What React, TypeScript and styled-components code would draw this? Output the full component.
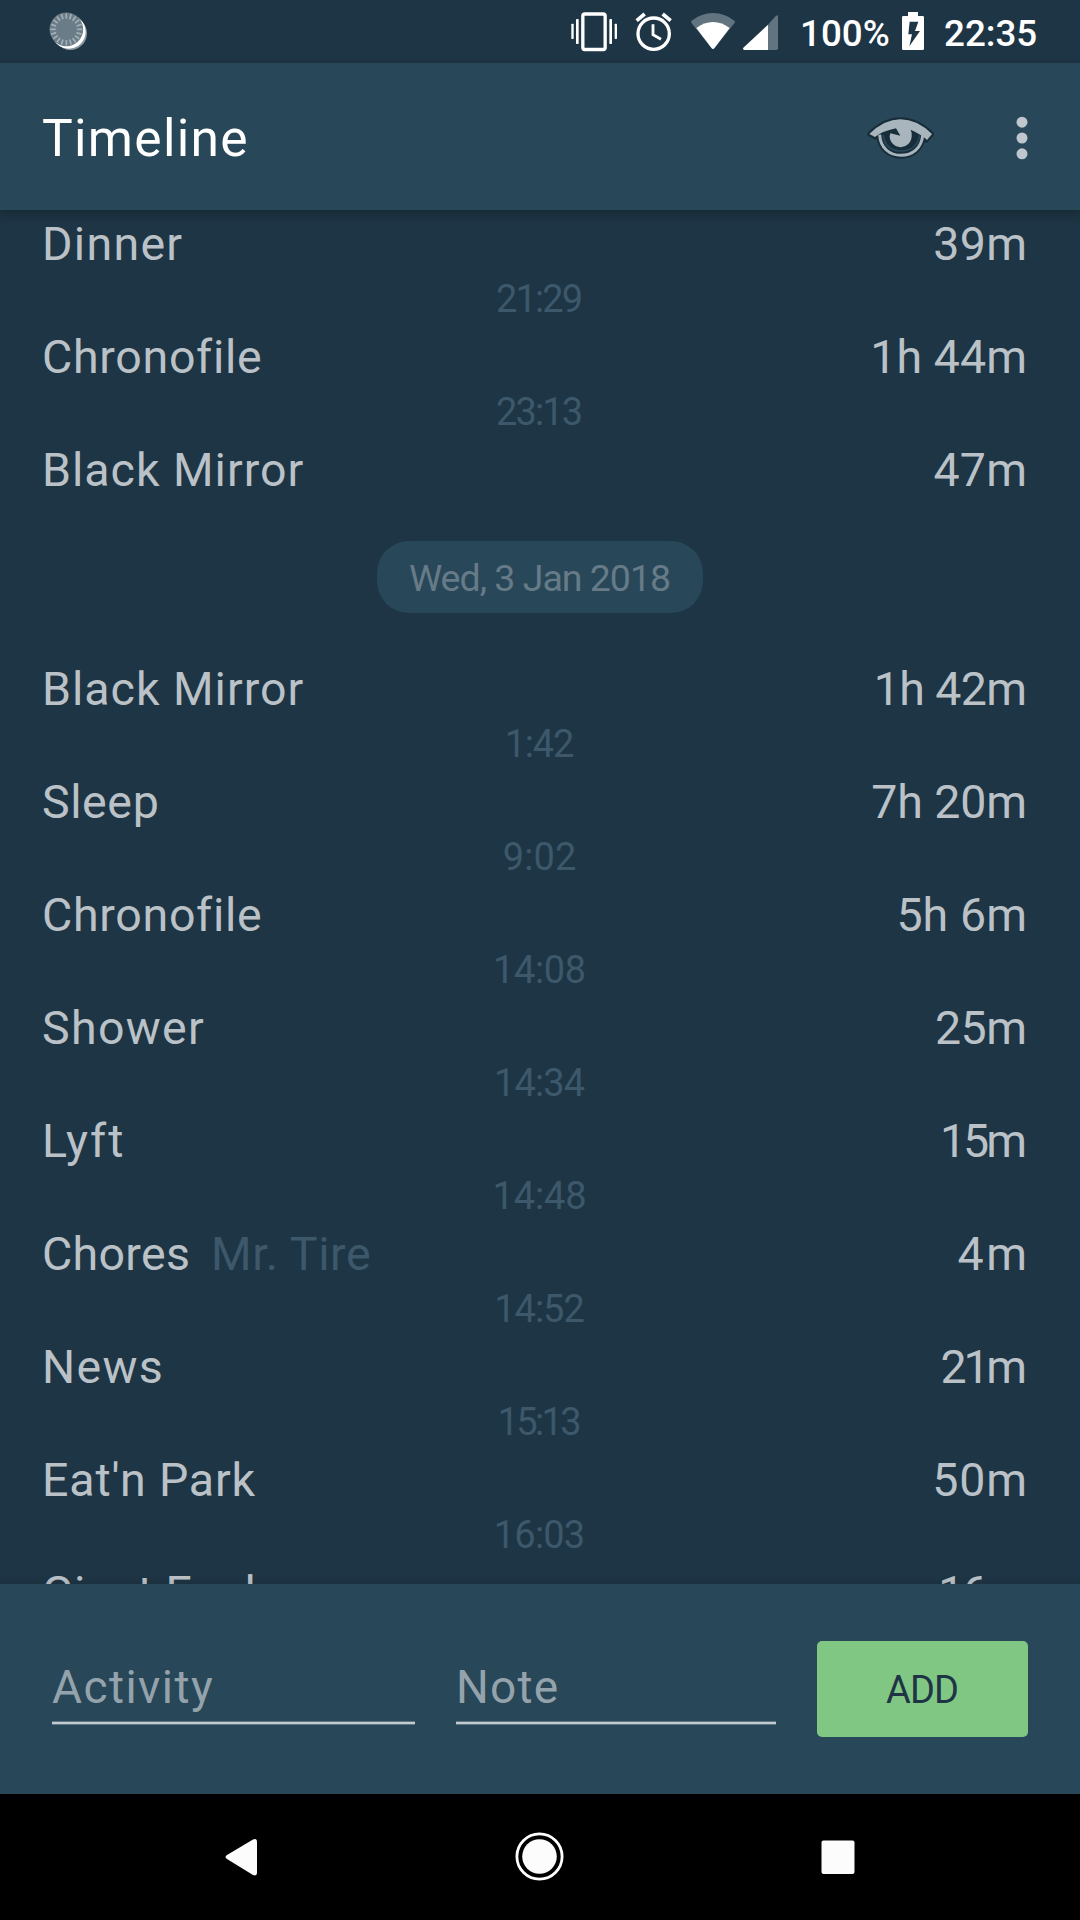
import React from 'react';
import styled, { createGlobalStyle } from 'styled-components';

const color = {
  background: '#1e3545',
  surface: '#284758',
  text: '#bbc2c7',
  faint: '#3c586a',
  chip: '#667b87',
  hint: '#94a3ab',
  accent: '#81c784',
  muted: '#62747f',
};

const GlobalStyle = createGlobalStyle`
  * { box-sizing: border-box; }
  body { margin: 0; background: ${color.background}; }
`;

const Screen = styled.div`
  display: flex;
  flex-direction: column;
  width: 1080px;
  height: 1920px;
  overflow: hidden;
  background: ${color.background};
  color: ${color.text};
  font-family: Roboto, 'Noto Sans', sans-serif;
`;

/* Cancels the trailing letter gap so that edges and centres stay exact. */
const Tracked = styled.span<{ $track?: number }>`
  letter-spacing: ${({ $track = 0 }) => $track}px;
  margin-right: ${({ $track = 0 }) => -$track}px;
  white-space: pre;
`;

const StatusBar = styled.header`
  flex: none;
  display: flex;
  height: 63px;
  padding-left: 46px;
`;

const StatusIcons = styled.div`
  display: flex;
  margin-left: auto;
  padding-right: 42px;
  color: #fff;
`;

const Glyph = styled.svg<{ $gap?: number }>`
  display: block;
  flex: none;
  margin-right: ${({ $gap = 0 }) => $gap}px;
`;

const StatusText = styled.span<{ $width: number }>`
  width: ${({ $width }) => $width}px;
  font-size: 36.75px;
  font-weight: 500;
  line-height: 67px;
  white-space: nowrap;
`;

const AppBar = styled.div`
  flex: none;
  z-index: 1;
  display: flex;
  align-items: center;
  height: 147px;
  padding: 0 52px 0 42px;
  background: ${color.surface};
  box-shadow: 0 4px 10px rgba(0, 0, 0, 0.28);
`;

const Title = styled.h1`
  flex: 1;
  margin: 0;
  padding-top: 5px;
  color: #fff;
  font-size: 51.5px;
  font-weight: 400;
  line-height: 60px;
`;

const AppActions = styled.div`
  display: flex;
  align-items: center;
  gap: 79px;
  padding-top: 3px;
`;

const IconButton = styled.button`
  display: block;
  margin: 0;
  padding: 0;
  border: 0;
  background: none;

  svg {
    display: block;
  }
`;

const Timeline = styled.main`
  flex: 1;
  min-height: 0;
  overflow: hidden;
  padding-top: 5px;
`;

const Entry = styled.div`
  display: flex;
  height: 58px;
  padding: 0 53px 0 42px;
  font-size: 46.5px;
  line-height: 58px;
`;

const Note = styled(Tracked)`
  margin-left: 21px;
  color: ${color.faint};
`;

const Duration = styled(Tracked)`
  margin-left: auto;
`;

const Time = styled.div`
  display: flex;
  justify-content: center;
  height: 55px;
  padding-right: 1px;
  color: ${color.faint};
  font-size: 38px;
  line-height: 53px;
`;

const DateChip = styled.div`
  display: flex;
  justify-content: center;
  width: 326px;
  height: 72px;
  margin: 42px auto 47px;
  border-radius: 32px;
  background: ${color.surface};
  color: ${color.chip};
  font-size: 37.5px;
  line-height: 74px;
`;

const EntryForm = styled.form`
  flex: none;
  z-index: 1;
  display: flex;
  gap: 41px;
  height: 210px;
  padding: 57px 52px 0;
  background: ${color.surface};
  box-shadow: 0 -2px 8px rgba(0, 0, 0, 0.1);
`;

const Field = styled.div<{ $width: number }>`
  width: ${({ $width }) => $width}px;
`;

const Input = styled.input<{ $track: number }>`
  display: block;
  width: 100%;
  height: 80px;
  margin: 0;
  padding: 12px 0 0;
  border: 0;
  outline: 0;
  background: none;
  color: ${color.text};
  font: 46px Roboto, 'Noto Sans', sans-serif;
  letter-spacing: ${({ $track }) => $track}px;

  &::placeholder {
    color: ${color.hint};
    opacity: 1;
  }
`;

const Underline = styled.div`
  height: 4px;
  border: solid #5f7683;
  border-width: 1px 0;
  background: #c2cbd1;
`;

const AddButton = styled.button`
  display: flex;
  justify-content: center;
  width: 211px;
  height: 96px;
  margin: 0;
  padding: 0;
  border: 0;
  border-radius: 5px;
  background: ${color.accent};
  color: ${color.background};
  font: 38px/98px Roboto, 'Noto Sans', sans-serif;
`;

const NavBar = styled.nav`
  flex: none;
  display: flex;
  justify-content: space-between;
  align-items: center;
  height: 126px;
  padding: 0 217px 0 216px;
  background: #000;
`;

type Tracking = [text: string, track: number];
type Activity = { name: Tracking; note?: Tracking; duration: Tracking; until?: Tracking };

const days: { date?: string; activities: Activity[] }[] = [
  {
    activities: [
      { name: ['Dinner', 1.3], duration: ['39m', 0.37], until: ['21:29', -1.9] },
      { name: ['Chronofile', 0.7], duration: ['1h 44m', 0.09], until: ['23:13', -1.9] },
      { name: ['Black Mirror', 1], duration: ['47m', 0.2] },
    ],
  },
  {
    date: 'Wed, 3 Jan 2018',
    activities: [
      { name: ['Black Mirror', 1], duration: ['1h 42m', -0.6], until: ['1:42', -1.2] },
      { name: ['Sleep', 0.6], duration: ['7h 20m', -0.11], until: ['9:02', 0.1] },
      { name: ['Chronofile', 0.7], duration: ['5h 6m', 0.1], until: ['14:08', -0.4] },
      { name: ['Shower', 1.35], duration: ['25m', -0.5], until: ['14:34', -0.9] },
      { name: ['Lyft', 1.9], duration: ['15m', -3], until: ['14:48', -0.1] },
      { name: ['Chores', 0.32], note: ['Mr. Tire', 0.6], duration: ['4m', 2.5], until: ['14:52', -1] },
      { name: ['News', 1.3], duration: ['21m', -3.3], until: ['15:13', -2.6] },
      { name: ["Eat'n Park", 0.85], duration: ['50m', 0.9], until: ['16:03', -0.8] },
      { name: ['Giant Eagle', 0.45], duration: ['16m', -2.1] },
    ],
  },
];

const ticks = Array.from({ length: 20 }, (_, i) => i * 18);

const MoonIcon = () => (
  <Glyph width="44" height="63" viewBox="138 0 132 189">
    <circle cx="211" cy="100" r="50" fill="#8b989f" />
    <circle cx="206" cy="95" r="51" fill="#fff" />
    <circle cx="199" cy="88" r="50.5" fill="#6a7c87" />
    <g stroke="#a3b0b7" strokeWidth="5">
      {ticks.map((angle) => (
        <line key={angle} x1="199" y1="40" x2="199" y2="56" transform={`rotate(${angle} 199 88)`} />
      ))}
    </g>
  </Glyph>
);

const VibrateIcon = () => (
  <Glyph $gap={17} width="48" height="63" viewBox="60 0 144 189" fill="#fff">
    <rect x="98.5" y="42" width="67" height="106.5" rx="6" fill="none" stroke="#fff" strokeWidth="10" />
    <rect x="78" y="57" width="8" height="75" rx="2" />
    <rect x="64" y="71" width="7" height="46" rx="2" />
    <rect x="178" y="57" width="8" height="75" rx="2" />
    <rect x="194" y="71" width="7" height="46" rx="2" />
  </Glyph>
);

const AlarmIcon = () => (
  <Glyph $gap={17} width="38" height="63" viewBox="255 0 114 189" fill="none" stroke="#fff">
    <circle cx="311" cy="101" r="47" strokeWidth="10" />
    <path d="M260 62 284 42M338 42l24 20" strokeWidth="11" />
    <path d="M309 73v31l24 14" strokeWidth="8.5" />
  </Glyph>
);

const WifiIcon = () => (
  <Glyph $gap={6} width="46" height="63" viewBox="420 0 138 189">
    <path
      d="M425 62Q454 39 489 39T553 62Q556 65 554 68L493 145Q489 149 485 145L424 68Q422 65 425 62Z"
      fill={color.muted}
    />
    <path d="M439 84Q462 66 489 66T539 84L493 145Q489 149 485 145Z" fill="#fff" />
  </Glyph>
);

const SignalIcon = () => (
  <Glyph $gap={21} width="37" height="63" viewBox="576 0 111 189">
    <path d="M654 74 677 48Q684 42 684 50V145Q684 150 679 150H654Z" fill={color.muted} />
    <path d="M654 74V150H583Q577 149 580 143Z" fill="#fff" />
  </Glyph>
);

const BatteryIcon = () => (
  <Glyph $gap={20} width="22" height="63" viewBox="366 0 66 189">
    <path d="M384 36h30v12h14q4 0 4 4v94q0 4-4 4h-58q-4 0-4-4v-94q0-4 4-4h14z" fill="#fff" />
    <path d="M389 65h26l-10 28h15l-32 46 8-36h-11z" fill={color.background} />
  </Glyph>
);

const EyeIcon = () => (
  <svg width="72" height="48" viewBox="16 42 216 144">
    <g fill="#172d3a" stroke="#172d3a" strokeLinejoin="round">
      <path
        d="M29 102Q74 58 122 58Q172 58 217 102L200 121Q184 103 122 88Q64 98 47 112Z"
        strokeWidth="13"
      />
      <path d="M60 105C62 144 90 166 124 166C158 166 185 144 189 108Z" strokeWidth="20" />
    </g>
    <path d="M70 105C76 142 100 153 124 153C150 153 173 140 180 106" fill="none" stroke="#284758" strokeWidth="5" />
    <path d="M60 104C62 144 90 166 124 166C158 166 186 144 189 106" fill="none" stroke="#a9b5bc" strokeWidth="9" />
    <path
      d="M29 102Q74 58 122 58Q172 58 217 102L202 120Q188 105 153 89Q157 97 156 109A33 33 0 0 1 90 108L92 100L122 107L109 85Q66 94 46 111Z"
      fill="#a9b5bc"
    />
  </svg>
);

const MoreIcon = () => (
  <svg width="12" height="48" viewBox="0 0 12 48" fill="#bec7ce">
    <circle cx="6" cy="8.2" r="5.5" />
    <circle cx="6" cy="24" r="5.5" />
    <circle cx="6" cy="39.8" r="5.5" />
  </svg>
);

const BackIcon = () => (
  <svg width="48" height="50" viewBox="0 0 48 50" fill="#fcfcfc">
    <path d="M11 23 37 7.5Q41 6 41 10V41Q41 44.5 37 43L11 27Q8 25 11 23Z" />
  </svg>
);

const HomeIcon = () => (
  <svg width="50" height="50" viewBox="0 0 50 50">
    <circle cx="24.5" cy="24.5" r="22.6" fill="none" stroke="#fff" strokeWidth="2.8" />
    <circle cx="24.5" cy="24.5" r="17.3" fill="#fcfcfc" />
  </svg>
);

const RecentsIcon = () => (
  <svg width="48" height="50" viewBox="0 0 48 50">
    <rect x="6.5" y="8.5" width="33" height="33.5" rx="2" fill="#fcfcfc" />
  </svg>
);

const App = () => (
  <>
    <GlobalStyle />
    <Screen>
      <StatusBar>
        <MoonIcon />
        <StatusIcons>
          <VibrateIcon />
          <AlarmIcon />
          <WifiIcon />
          <SignalIcon />
          <StatusText $width={102}>100%</StatusText>
          <BatteryIcon />
          <StatusText $width={94}>22:35</StatusText>
        </StatusIcons>
      </StatusBar>

      <AppBar>
        <Title>
          <Tracked $track={1.3}>Timeline</Tracked>
        </Title>
        <AppActions>
          <IconButton aria-label="Visibility">
            <EyeIcon />
          </IconButton>
          <IconButton aria-label="More options">
            <MoreIcon />
          </IconButton>
        </AppActions>
      </AppBar>

      <Timeline>
        {days.map(({ date, activities }, day) => (
          <section key={day}>
            {date && (
              <DateChip>
                <Tracked $track={-1}>{date}</Tracked>
              </DateChip>
            )}
            {activities.map(({ name, note, duration, until }, index) => (
              <React.Fragment key={index}>
                <Entry>
                  <Tracked $track={name[1]}>{name[0]}</Tracked>
                  {note && <Note $track={note[1]}>{note[0]}</Note>}
                  <Duration $track={duration[1]}>{duration[0]}</Duration>
                </Entry>
                {until && (
                  <Time>
                    <Tracked $track={until[1]}>{until[0]}</Tracked>
                  </Time>
                )}
              </React.Fragment>
            ))}
          </section>
        ))}
      </Timeline>

      <EntryForm>
        <Field $width={363}>
          <Input $track={1.45} placeholder="Activity" />
          <Underline />
        </Field>
        <Field $width={320}>
          <Input $track={1.25} placeholder="Note" />
          <Underline />
        </Field>
        <AddButton type="button">
          <Tracked $track={-0.86}>ADD</Tracked>
        </AddButton>
      </EntryForm>

      <NavBar>
        <BackIcon />
        <HomeIcon />
        <RecentsIcon />
      </NavBar>
    </Screen>
  </>
);

export default App;
